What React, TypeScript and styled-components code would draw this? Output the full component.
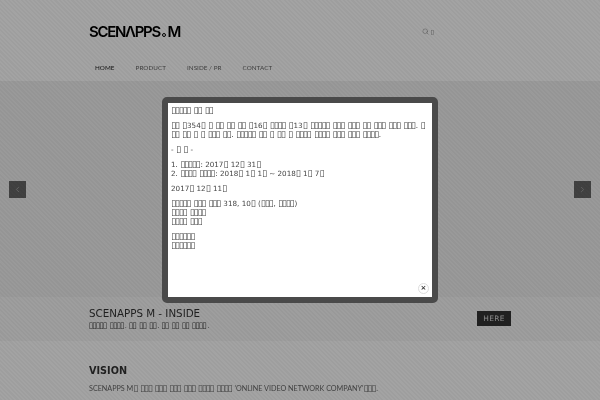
import styled, { createGlobalStyle } from "styled-components";
import { Search, ChevronLeft, ChevronRight } from "lucide-react";

const GlobalStyle = createGlobalStyle`
  html, body {
    margin: 0;
    padding: 0;
    width: 600px;
    height: 400px;
    overflow: hidden;
    background: #fff;
  }
`;

const Page = styled.div`
  position: relative;
  width: 600px;
  height: 400px;
  overflow: hidden;
  display: flex;
  flex-direction: column;
  font-family: "DejaVu Sans", sans-serif;
  filter: blur(0.3px);
`;

const Header = styled.header`
  height: 81px;
  flex: none;
  box-sizing: border-box;
  padding: 0 89px;
  display: flex;
  flex-direction: column;
`;

const TopRow = styled.div`
  height: 60px;
  box-sizing: border-box;
  padding: 3px 77px 0 0;
  display: flex;
  align-items: center;
  justify-content: space-between;
`;

const Logo = styled.div`
  display: flex;
  align-items: baseline;
  font-family: Inter, sans-serif;
  font-size: 15px;
  font-weight: 600;
  letter-spacing: -1.3px;
  color: #000;
`;

const LogoDot = styled.span`
  width: 4px;
  height: 4px;
  box-sizing: border-box;
  border: 1px solid #000;
  border-radius: 50%;
  margin: 0 1.5px 0 2px;
`;

const SearchBox = styled.div`
  display: flex;
  align-items: center;
  gap: 2px;
  font-size: 5px;
  color: #777;
`;

const Nav = styled.nav`
  display: flex;
  gap: 21px;
  padding-left: 6px;
  height: 14px;
  align-items: center;
`;

const NavItem = styled.a<{ $active?: boolean }>`
  font-family: Lato, sans-serif;
  font-size: 6.3px;
  letter-spacing: 0.05px;
  color: ${(p) => (p.$active ? "#222" : "#666")};
`;

const Slider = styled.section`
  height: 216px;
  flex: none;
  background: #f0f0f0;
  display: flex;
  align-items: center;
  justify-content: space-between;
  padding: 0 9px;
  box-sizing: border-box;
`;

const Arrow = styled.div`
  width: 17px;
  height: 17px;
  background: #666;
  color: #aaa;
  display: flex;
  align-items: center;
  justify-content: center;
`;

const Caption = styled.section`
  height: 44px;
  flex: none;
  background: #f7f7f7;
  box-sizing: border-box;
  padding: 9px 89px 0;
  display: flex;
  justify-content: space-between;
`;

const CaptionTitle = styled.h2`
  margin: 0;
  font-size: 10.3px;
  line-height: 14px;
  font-weight: 400;
  color: #333;
`;

const CaptionText = styled.p`
  margin: 0;
  font-size: 6.6px;
  line-height: 12px;
  color: #444;
`;

const HereButton = styled.a`
  width: 34px;
  height: 15px;
  margin-top: 5px;
  background: #333;
  color: #ddd;
  font-size: 7.5px;
  letter-spacing: 0.3px;
  display: flex;
  align-items: center;
  justify-content: center;
`;

const Vision = styled.section`
  padding: 23px 89px 0;
`;

const VisionTitle = styled.h3`
  margin: 0 0 5px;
  font-size: 9.7px;
  line-height: 14px;
  font-weight: 700;
  color: #333;
`;

const VisionText = styled.p`
  margin: 0;
  font-family: Lato, "DejaVu Sans", sans-serif;
  font-size: 7.2px;
  line-height: 12px;
  white-space: nowrap;
  color: #666;
`;

const Overlay = styled.div`
  position: absolute;
  inset: 0;
  background: repeating-linear-gradient(
    45deg,
    rgba(0, 0, 0, 0.38) 0 1.5px,
    rgba(0, 0, 0, 0.36) 1.5px 3px
  );
`;

const Modal = styled.div`
  position: absolute;
  left: 162px;
  top: 97px;
  width: 276px;
  height: 206px;
  box-sizing: border-box;
  border: 6px solid #4a4a4a;
  border-radius: 5px;
  background: #fff;
`;

const ModalBody = styled.div`
  padding: 3px 0 0 3px;
  font-size: 7.2px;
  line-height: 9px;
  color: #444;
`;

const Para = styled.p`
  margin: 0 0 6px;
`;

const TofuRun = styled.span`
  font-size: 1.25em;
  line-height: 1px;
  letter-spacing: -0.125em;
  margin-right: 0.125em;
`;

const CloseButton = styled.div`
  position: absolute;
  right: 3px;
  bottom: 3px;
  width: 11px;
  height: 11px;
  box-sizing: border-box;
  border: 1px solid #ddd;
  border-radius: 50%;
  background: #fff;
  color: #333;
  font-size: 7px;
  font-weight: 700;
  line-height: 8px;
  text-align: center;
`;

// the reference shows its hangul as empty boxes, runs of them get packed tighter
function Tofu({ text }: { text: string }) {
  return (
    <>
      {text.split(/(▯+)/).map((part, i) =>
        part.startsWith("▯") ? <TofuRun key={i}>{part}</TofuRun> : part
      )}
    </>
  );
}

export default function App() {
  return (
    <Page>
      <GlobalStyle />
      <Header>
        <TopRow>
          <Logo>
            SCENΛPPS
            <LogoDot />M
          </Logo>
          <SearchBox>
            <Search size={7} strokeWidth={1.5} />
            <Tofu text="▯" />
          </SearchBox>
        </TopRow>
        <Nav>
          <NavItem $active>HOME</NavItem>
          <NavItem>PRODUCT</NavItem>
          <NavItem>INSIDE / PR</NavItem>
          <NavItem>CONTACT</NavItem>
        </Nav>
      </Header>
      <Slider>
        <Arrow>
          <ChevronLeft size={9} />
        </Arrow>
        <Arrow>
          <ChevronRight size={9} />
        </Arrow>
      </Slider>
      <Caption>
        <div>
          <CaptionTitle>SCENAPPS M - INSIDE</CaptionTitle>
          <CaptionText>
            <Tofu text="▯▯▯▯▯ ▯▯▯▯. ▯▯ ▯▯ ▯▯. ▯▯ ▯▯ ▯▯ ▯▯▯▯." />
          </CaptionText>
        </div>
        <HereButton>HERE</HereButton>
      </Caption>
      <Vision>
        <VisionTitle>VISION</VisionTitle>
        <VisionText>
          <Tofu text="SCENAPPS M▯ ▯▯▯ ▯▯▯ ▯▯▯ ▯▯▯ ▯▯▯▯ ▯▯▯▯ 'ONLINE VIDEO NETWORK COMPANY'▯▯▯." />
        </VisionText>
      </Vision>
      <Overlay />
      <Modal>
        <ModalBody>
          <Para>
            <Tofu text="▯▯▯▯▯ ▯▯ ▯▯" />
          </Para>
          <Para>
            <Tofu text="▯▯ ▯354▯ ▯ ▯▯ ▯▯ ▯▯ ▯16▯ ▯▯▯▯ ▯13▯ ▯▯▯▯▯ ▯▯▯ ▯▯▯ ▯▯ ▯▯▯ ▯▯▯ ▯▯▯. ▯" />
            <br />
            <Tofu text="▯▯ ▯▯ ▯ ▯ ▯▯▯ ▯▯. ▯▯▯▯▯ ▯▯ ▯ ▯▯ ▯ ▯▯▯▯ ▯▯▯▯ ▯▯▯ ▯▯▯ ▯▯▯▯." />
          </Para>
          <Para>
            <Tofu text="- ▯ ▯ -" />
          </Para>
          <Para>
            <Tofu text="1. ▯▯▯▯▯: 2017▯ 12▯ 31▯" />
            <br />
            <Tofu text="2. ▯▯▯▯ ▯▯▯▯: 2018▯ 1▯ 1▯ ~ 2018▯ 1▯ 7▯" />
          </Para>
          <Para>
            <Tofu text="2017▯ 12▯ 11▯" />
          </Para>
          <Para>
            <Tofu text="▯▯▯▯▯ ▯▯▯ ▯▯▯ 318, 10▯ (▯▯▯, ▯▯▯▯)" />
            <br />
            <Tofu text="▯▯▯▯ ▯▯▯▯" />
            <br />
            <Tofu text="▯▯▯▯ ▯▯▯" />
          </Para>
          <Para>
            <Tofu text="▯▯▯▯▯▯" />
            <br />
            <Tofu text="▯▯▯▯▯▯" />
          </Para>
        </ModalBody>
        <CloseButton>×</CloseButton>
      </Modal>
    </Page>
  );
}
